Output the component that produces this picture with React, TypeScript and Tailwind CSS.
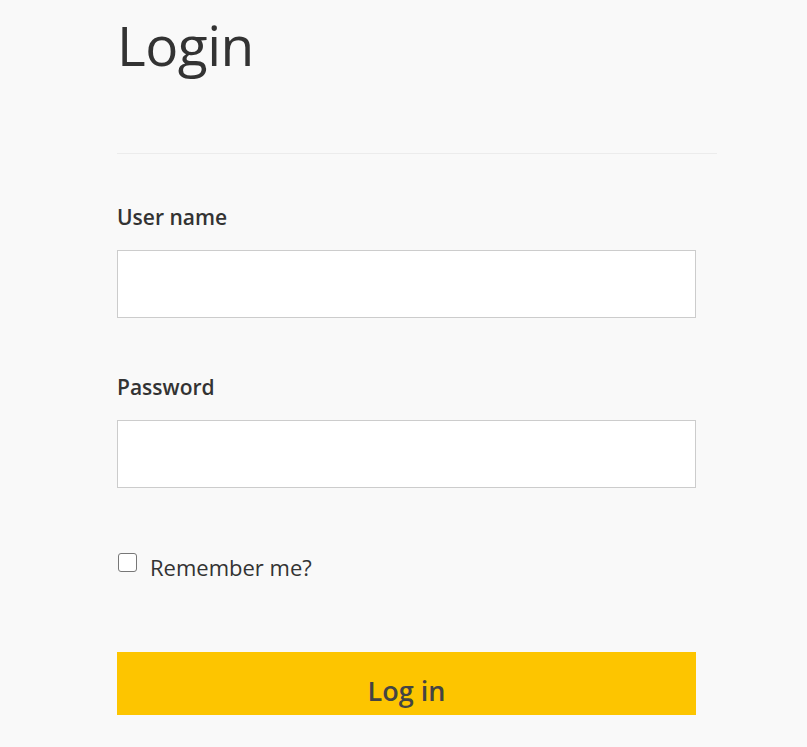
import React from "react";

export default function App() {
  return (
    <div className="min-h-[747px] w-full bg-[#f9f9f9] text-[#333]" style={{ fontFamily: '"Open Sans", "Noto Sans", sans-serif' }}>
      <div className="pl-[117px] w-[717px]">
        <div className="h-[86px] pt-[17px]">
          <h1 className="text-[55px] font-normal leading-none text-[#333] tracking-[-0.5px]">Login</h1>
        </div>
        <div className="mt-[67px] h-px bg-[#ececec] w-[600px]" />
        <div className="w-[579px] pt-[49px]">
          <label className="block text-[21px] font-semibold leading-[28px] tracking-[0px] text-[#333]">User name</label>
          <input className="mt-[19px] block w-full h-[68px] bg-white border border-[#cccccc] outline-none" />
          <label className="block mt-[55px] text-[21px] font-semibold leading-[28px] tracking-[0px] text-[#333]">Password</label>
          <input type="password" className="mt-[19px] block w-full h-[68px] bg-white border border-[#cccccc] outline-none" />
          <div className="mt-[65px] flex items-start h-[28px]">
            <span className="block w-[19px] h-[19px] ml-px border border-[#777] rounded-[3px] bg-white" />
            <span className="ml-[13px] text-[22px] leading-[28px] tracking-[0px] text-[#333]">Remember me?</span>
          </div>
          <button className="mt-[71px] w-full h-[63px] bg-[#fdc500] text-[#444] text-[27px] font-semibold pt-[15px] tracking-[0px]">Log in</button>
        </div>
      </div>
    </div>
  );
}
